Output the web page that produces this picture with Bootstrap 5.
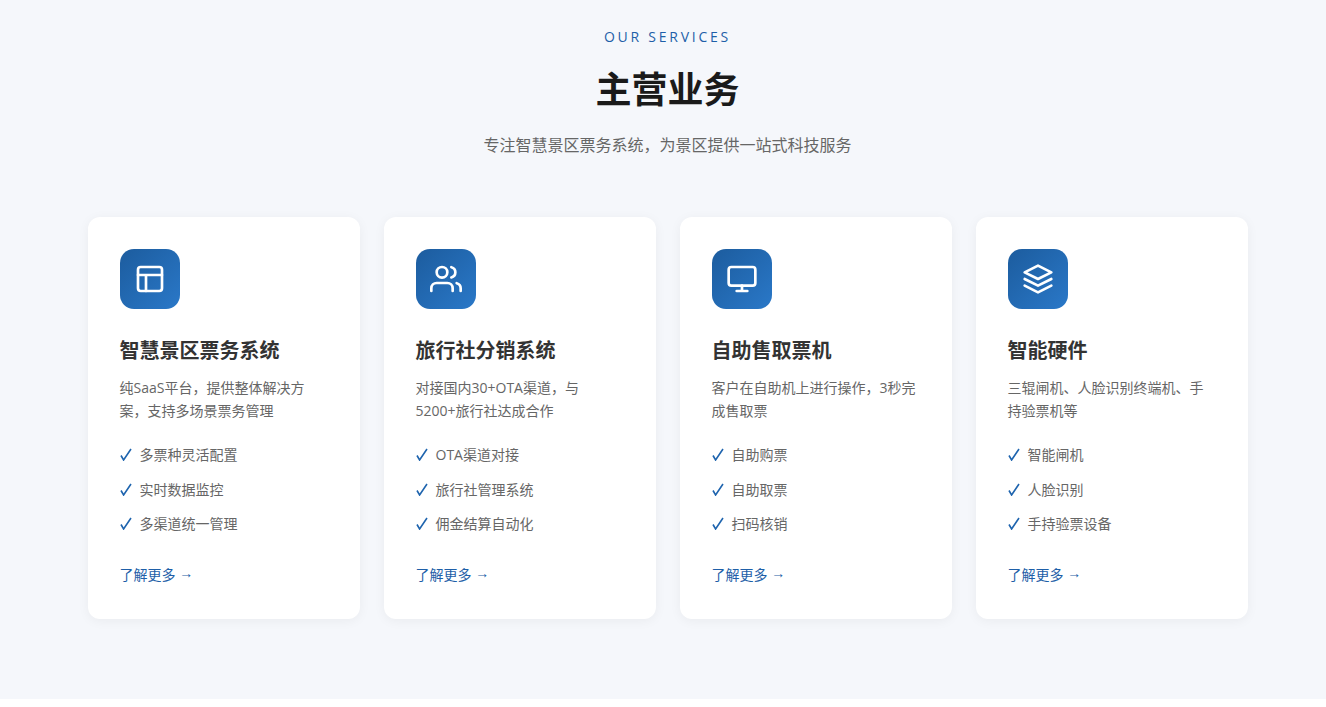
<!DOCTYPE html>
<html lang="zh-CN">
<head>
  <meta charset="UTF-8" />
  <meta name="viewport" content="width=device-width, initial-scale=1" />
  <title>主营业务</title>

  <link href="https://cdn.jsdelivr.net/npm/bootstrap@5.3.0/dist/css/bootstrap.min.css" rel="stylesheet" />

  <style>
    body {
      background: #ffffff;
      font-family: "Open Sans", "Noto Sans CJK SC", sans-serif;
    }

    .services-section {
      background: #f5f7fb;
      height: 699px;
      padding-top: 27px;
    }

    .services-wrap {
      width: 1160px;
      margin-left: 87.5px;
    }

    .services-eyebrow {
      color: #1e5fa8;
      font-size: 14px;
      line-height: 20px;
      letter-spacing: 2.75px;
      margin-bottom: 18px;
    }

    .services-title {
      color: #1a1a1a;
      font-size: 36px;
      font-weight: 700;
      line-height: 50px;
      margin-bottom: 17px;
    }

    .services-sub {
      color: #666666;
      font-size: 16px;
      line-height: 26px;
      margin-bottom: 59px;
    }

    .service-grid {
      display: grid;
      grid-template-columns: repeat(4, 1fr);
      gap: 24px;
    }

    .service-card {
      background: #ffffff;
      border-radius: 12px;
      box-shadow: 0 2px 12px rgba(0, 0, 0, 0.05);
      height: 402px;
      padding: 32px;
    }

    .service-icon {
      width: 60px;
      height: 60px;
      border-radius: 14px;
      background: linear-gradient(135deg, #1c5c9e, #2a78c8);
      margin-bottom: 25px;
    }

    .service-name {
      color: #333333;
      font-size: 20px;
      font-weight: 700;
      line-height: 34px;
      margin-bottom: 8px;
    }

    .service-desc {
      color: #666666;
      font-size: 14px;
      line-height: 23px;
      margin-bottom: 16px;
    }

    .service-points li {
      color: #666666;
      font-size: 14px;
      line-height: 20px;
      padding: 7px 0;
    }

    .service-points li:nth-child(2) {
      padding-top: 8px;
    }

    .point-check {
      width: 12px;
      height: 13px;
      margin-top: 3px;
      margin-right: 8px;
      fill: none;
      stroke: #1e64ae;
      stroke-width: 1.6;
    }

    .service-more {
      color: #1e5fa8;
      font-size: 14px;
      line-height: 20px;
      margin-top: 24px;
    }

    .more-arrow {
      font-family: "Liberation Sans", sans-serif;
      line-height: 1;
      vertical-align: 2px;
    }

    .service-icon svg {
      fill: none;
      stroke: #ffffff;
      stroke-width: 2;
      stroke-linecap: round;
      stroke-linejoin: round;
    }
  </style>
</head>
<body>

<svg class="d-none">
  <symbol id="tick" viewBox="0 0 12 13"><path d="M1 7.5 3.6 12 11 1"/></symbol>
</svg>

<section class="services-section">
  <div class="services-wrap">
    <div class="text-center">
      <div class="services-eyebrow">OUR SERVICES</div>
      <h2 class="services-title">主营业务</h2>
      <p class="services-sub">专注智慧景区票务系统，为景区提供一站式科技服务</p>
    </div>

    <div class="service-grid">

      <div class="service-card">
        <div class="service-icon d-flex align-items-center justify-content-center">
          <svg width="32" height="32" viewBox="0 0 24 24"><rect x="3" y="3" width="18" height="18" rx="2"/><path d="M3 9h18M9 21V9"/></svg>
        </div>
        <h3 class="service-name">智慧景区票务系统</h3>
        <p class="service-desc">纯SaaS平台，提供整体解决方案，支持多场景票务管理</p>
        <ul class="service-points list-unstyled mb-0">
          <li class="d-flex"><svg class="point-check"><use href="#tick"/></svg>多票种灵活配置</li>
          <li class="d-flex"><svg class="point-check"><use href="#tick"/></svg>实时数据监控</li>
          <li class="d-flex"><svg class="point-check"><use href="#tick"/></svg>多渠道统一管理</li>
        </ul>
        <div class="service-more"><a href="#" class="service-more text-decoration-none">了解更多 <span class="more-arrow">→</span></a></div>
      </div>

      <div class="service-card">
        <div class="service-icon d-flex align-items-center justify-content-center">
          <svg width="32" height="32" viewBox="0 0 24 24"><path d="M17 21v-2a4 4 0 0 0-4-4H5a4 4 0 0 0-4 4v2"/><circle cx="9" cy="7" r="4"/><path d="M23 21v-2a4 4 0 0 0-3-3.87M16 3.13a4 4 0 0 1 0 7.75"/></svg>
        </div>
        <h3 class="service-name">旅行社分销系统</h3>
        <p class="service-desc">对接国内30+OTA渠道，与<br>5200+旅行社达成合作</p>
        <ul class="service-points list-unstyled mb-0">
          <li class="d-flex"><svg class="point-check"><use href="#tick"/></svg>OTA渠道对接</li>
          <li class="d-flex"><svg class="point-check"><use href="#tick"/></svg>旅行社管理系统</li>
          <li class="d-flex"><svg class="point-check"><use href="#tick"/></svg>佣金结算自动化</li>
        </ul>
        <div class="service-more"><a href="#" class="service-more text-decoration-none">了解更多 <span class="more-arrow">→</span></a></div>
      </div>

      <div class="service-card">
        <div class="service-icon d-flex align-items-center justify-content-center">
          <svg width="32" height="32" viewBox="0 0 24 24"><rect x="2" y="3" width="20" height="14" rx="2"/><path d="M8 21h8M12 17v4"/></svg>
        </div>
        <h3 class="service-name">自助售取票机</h3>
        <p class="service-desc">客户在自助机上进行操作，3秒完成售取票</p>
        <ul class="service-points list-unstyled mb-0">
          <li class="d-flex"><svg class="point-check"><use href="#tick"/></svg>自助购票</li>
          <li class="d-flex"><svg class="point-check"><use href="#tick"/></svg>自助取票</li>
          <li class="d-flex"><svg class="point-check"><use href="#tick"/></svg>扫码核销</li>
        </ul>
        <div class="service-more"><a href="#" class="service-more text-decoration-none">了解更多 <span class="more-arrow">→</span></a></div>
      </div>

      <div class="service-card">
        <div class="service-icon d-flex align-items-center justify-content-center">
          <svg width="32" height="32" viewBox="0 0 24 24"><path d="M12 2 2 7l10 5 10-5-10-5z"/><path d="m2 17 10 5 10-5M2 12l10 5 10-5"/></svg>
        </div>
        <h3 class="service-name">智能硬件</h3>
        <p class="service-desc">三辊闸机、人脸识别终端机、手持验票机等</p>
        <ul class="service-points list-unstyled mb-0">
          <li class="d-flex"><svg class="point-check"><use href="#tick"/></svg>智能闸机</li>
          <li class="d-flex"><svg class="point-check"><use href="#tick"/></svg>人脸识别</li>
          <li class="d-flex"><svg class="point-check"><use href="#tick"/></svg>手持验票设备</li>
        </ul>
        <div class="service-more"><a href="#" class="service-more text-decoration-none">了解更多 <span class="more-arrow">→</span></a></div>
      </div>

    </div>
  </div>
</section>

<script src="https://cdn.jsdelivr.net/npm/bootstrap@5.3.0/dist/js/bootstrap.bundle.min.js"></script>
</body>
</html>
